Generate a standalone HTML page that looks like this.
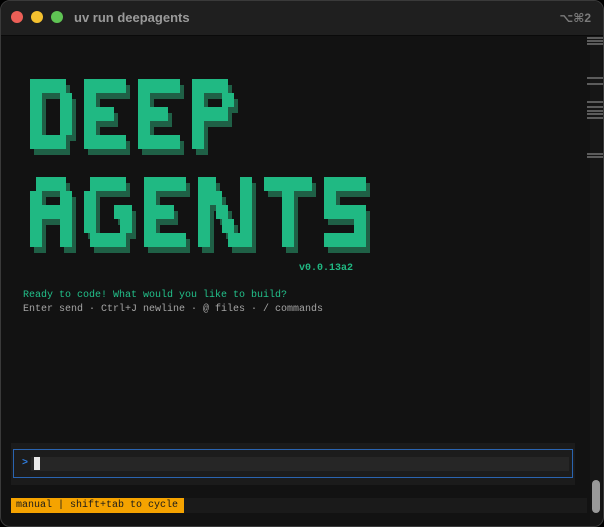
<!DOCTYPE html>
<html><head><meta charset="utf-8"><style>
html,body{margin:0;padding:0;background:#000;}
body{width:604px;height:527px;overflow:hidden;position:relative;font-family:"Liberation Mono",monospace;}
.win{position:absolute;left:0;top:0;width:602px;height:525px;border:1px solid #3a3a3a;border-radius:10px;background:#121212;overflow:hidden;}
.title{position:absolute;left:0;top:0;width:100%;height:34px;background:#1f1f1f;border-bottom:1px solid #0a0a0a;}
.dot{position:absolute;top:10px;width:12px;height:12px;border-radius:50%;}
.tt{position:absolute;left:73px;top:9px;font:bold 13px "Liberation Sans",sans-serif;color:#9a9a9a;}
.kb{position:absolute;right:12px;top:10px;font:bold 12px "Liberation Sans","DejaVu Sans",sans-serif;color:#7a7a7a;}
.t{position:absolute;font-size:10px;line-height:13px;white-space:pre;}
.sb{position:absolute;left:588px;top:35px;width:14px;height:490px;}
.tick{position:absolute;left:-2px;width:16px;height:2px;background:#5c5c5c;}
</style></head><body>
<div class="win">
<div class="title">
<div class="dot" style="left:10px;background:#ec5f57"></div>
<div class="dot" style="left:30px;background:#f4c12f"></div>
<div class="dot" style="left:50px;background:#5fc454"></div>
<div class="tt">uv run deepagents</div>
<div class="kb">⌥⌘2</div>
</div>
<svg width="604" height="527" style="position:absolute;left:-1px;top:-1px">
<defs>
<g id="d">
<rect x="0" y="0" width="36" height="14"/><rect x="0" y="14" width="12" height="42"/><rect x="30" y="14" width="12" height="42"/><rect x="0" y="56" width="36" height="14"/>
<rect x="54" y="0" width="42" height="14"/><rect x="54" y="14" width="12" height="42"/><rect x="54" y="28" width="30" height="14"/><rect x="54" y="56" width="42" height="14"/>
<rect x="108" y="0" width="42" height="14"/><rect x="108" y="14" width="12" height="42"/><rect x="108" y="28" width="30" height="14"/><rect x="108" y="56" width="42" height="14"/>
<rect x="162" y="0" width="36" height="14"/><rect x="162" y="14" width="12" height="56"/><rect x="192" y="14" width="12" height="14"/><rect x="162" y="28" width="36" height="14"/>
</g>
<g id="a">
<rect x="6" y="0" width="30" height="14"/><rect x="0" y="14" width="12" height="56"/><rect x="30" y="14" width="12" height="56"/><rect x="0" y="28" width="42" height="14"/>
<rect x="60" y="0" width="36" height="14"/><rect x="54" y="14" width="12" height="42"/><rect x="84" y="28" width="18" height="14"/><rect x="90" y="42" width="12" height="14"/><rect x="60" y="56" width="36" height="14"/>
<rect x="114" y="0" width="42" height="14"/><rect x="114" y="14" width="12" height="42"/><rect x="114" y="28" width="30" height="14"/><rect x="114" y="56" width="42" height="14"/>
<rect x="168" y="0" width="18" height="14"/><rect x="168" y="0" width="12" height="70"/><rect x="210" y="0" width="12" height="63"/><rect x="198" y="56" width="24" height="14"/><rect x="180" y="14" width="12" height="14"/><rect x="186" y="28" width="12" height="14"/><rect x="192" y="42" width="12" height="14"/>
<rect x="234" y="0" width="48" height="14"/><rect x="252" y="14" width="12" height="56"/>
<rect x="294" y="0" width="42" height="14"/><rect x="294" y="14" width="12" height="14"/><rect x="294" y="28" width="42" height="14"/><rect x="324" y="42" width="12" height="14"/><rect x="294" y="56" width="42" height="14"/>
</g>
</defs>
<g fill="#1f6046"><use href="#d" x="34" y="85"/><use href="#a" x="34" y="183"/></g>
<g fill="#20b983"><use href="#d" x="30" y="79"/><use href="#a" x="30" y="177"/></g>
</svg>
<div class="t" style="left:298px;top:261px;color:#20b983;font-weight:bold">v0.0.13a2</div>
<div class="t" style="left:22px;top:288px;color:#22c08a">Ready to code! What would you like to build?</div>
<div class="t" style="left:22px;top:302px;color:#a5a5a5">Enter send · Ctrl+J newline · @ files · / commands</div>
<div style="position:absolute;left:10px;top:442px;width:564px;height:42px;background:#1b1b1b"></div>
<div style="position:absolute;left:12px;top:448px;width:558px;height:27px;border:1px solid #2a64b0;background:#1c1c1c"></div>
<div style="position:absolute;left:30px;top:456px;width:538px;height:14px;background:#262626"></div>
<div class="t" style="left:21px;top:456px;color:#2f7de0;font-weight:bold">&gt;</div>
<div style="position:absolute;left:33px;top:456px;width:6px;height:13px;background:#e8e8e8"></div>
<div style="position:absolute;left:10px;top:497px;width:576px;height:15px;background:#1a1a1a"></div>
<div class="t" style="left:10px;top:497px;width:173px;height:15px;line-height:15px;background:#f5a300;color:#1a1a1a;padding-left:5px;box-sizing:border-box">manual | shift+tab to cycle</div>
<div class="sb">
<div style="position:absolute;left:1px;top:0;width:1px;height:490px;background:#2c2c2c"></div>
<div style="position:absolute;left:1px;top:0;width:12px;height:490px;background:#161616"></div>
<div class="tick" style="top:1px"></div><div class="tick" style="top:4px"></div><div class="tick" style="top:7px"></div>
<div class="tick" style="top:41px"></div><div class="tick" style="top:47px"></div>
<div class="tick" style="top:65px"></div><div class="tick" style="top:70px"></div><div class="tick" style="top:74px"></div><div class="tick" style="top:77px"></div><div class="tick" style="top:81px"></div>
<div class="tick" style="top:117px"></div><div class="tick" style="top:120px"></div>
<div style="position:absolute;left:3px;top:444px;width:8px;height:33px;border-radius:4px;background:#9a9a9a"></div>
</div>
</div>
</body></html>
